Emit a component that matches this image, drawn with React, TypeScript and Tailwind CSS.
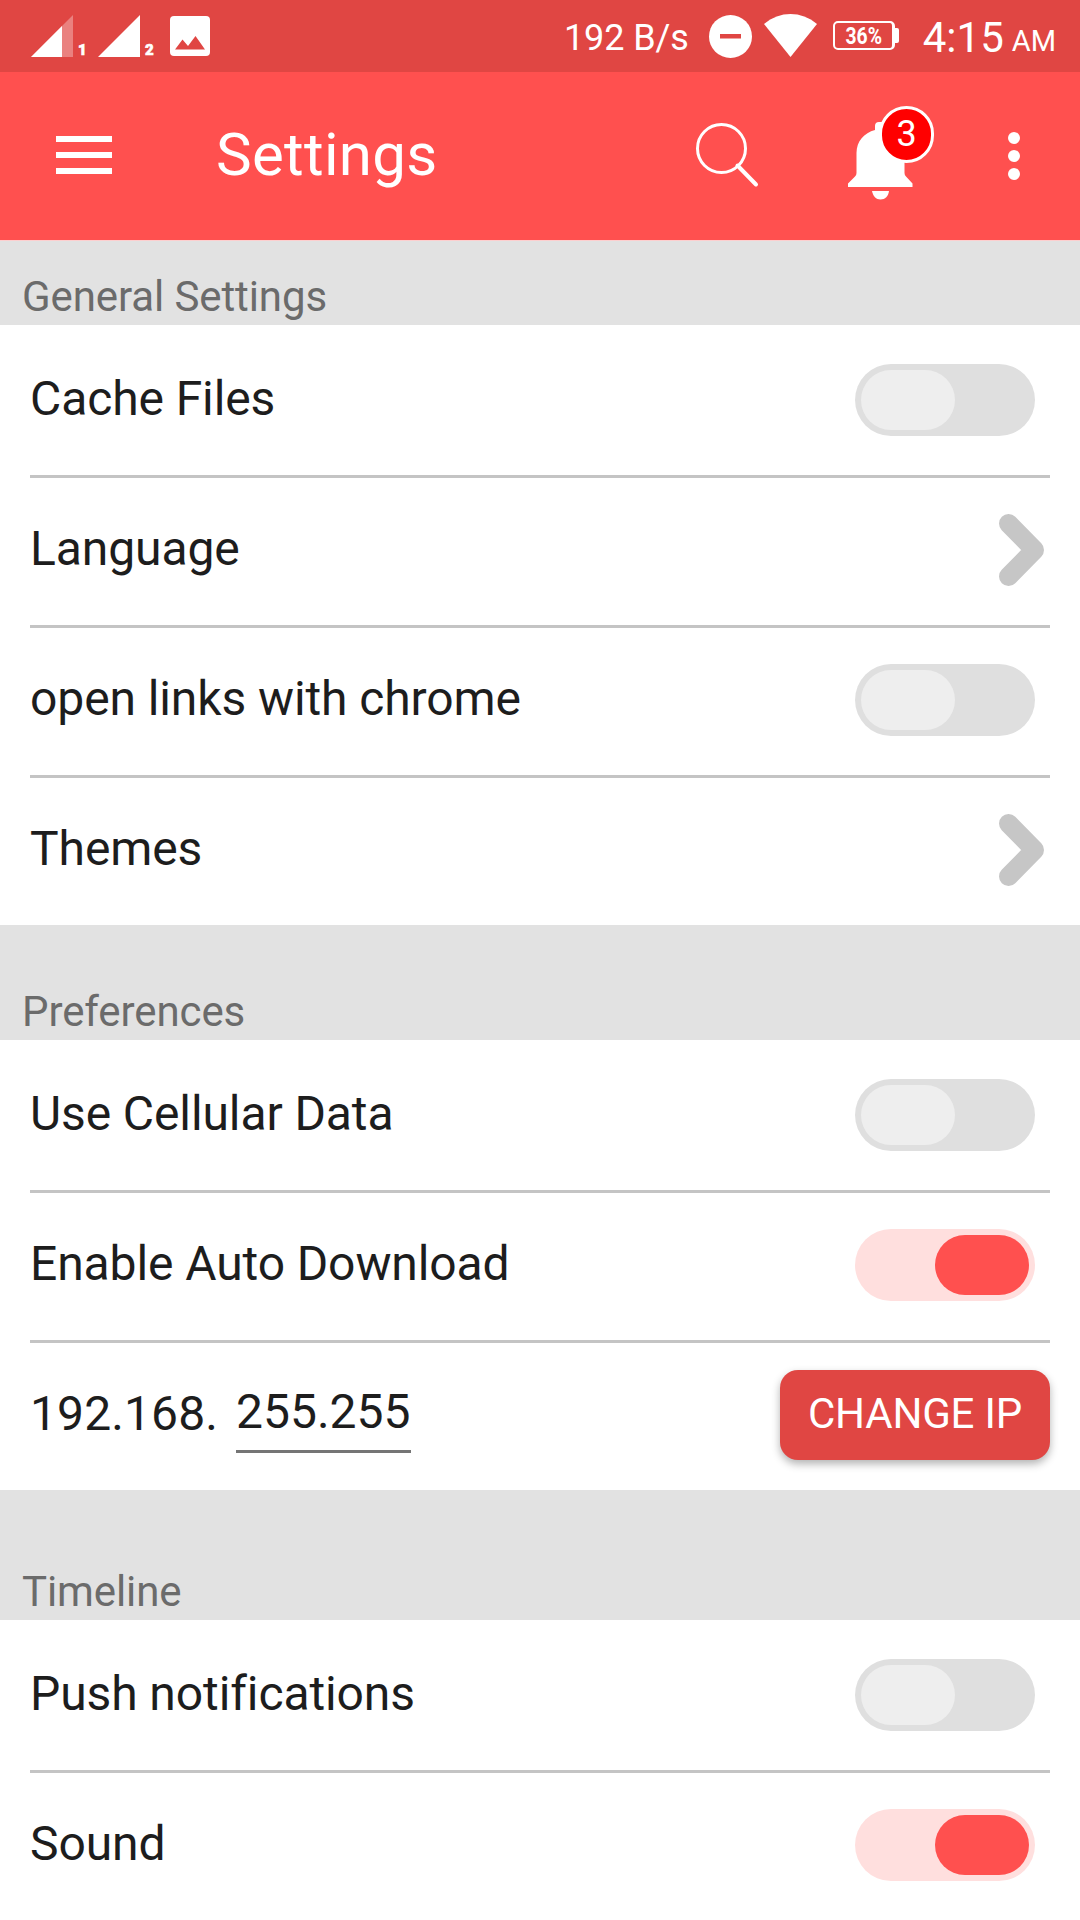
import type { ReactNode } from "react";

function Toggle({ on = false }: { on?: boolean }) {
  return (
    <div
      role="switch"
      aria-checked={on}
      className={
        on
          ? "mr-[15px] flex h-[72px] w-[180px] justify-end rounded-full bg-[#ffdfde] p-[6px]"
          : "mr-[15px] flex h-[72px] w-[180px] justify-start rounded-full bg-[#dfdfdf] p-[6px]"
      }
    >
      <div className={on ? "h-[60px] w-[94px] rounded-full bg-[#ff504f]" : "h-[60px] w-[94px] rounded-full bg-[#eeeeee]"} />
    </div>
  );
}

function Chevron() {
  return (
    <svg className="mr-[6px] h-[72px] w-[45px]" viewBox="0 0 45 72" fill="none">
      <path d="M9.5 9.5 35.5 36 9.5 62.5" stroke="#c6c6c6" strokeWidth="19" strokeLinecap="round" strokeLinejoin="round" />
    </svg>
  );
}

function SectionHeader({ title, className }: { title: string; className: string }) {
  return (
    <div className={`flex items-end bg-[#e2e2e2] pb-[3px] pl-[22px] text-[42px] leading-[50px] tracking-[-0.1px] text-[#6b6b6b] ${className}`}>
      <h2 className="font-normal">{title}</h2>
    </div>
  );
}

function Row({ label, children }: { label: string; children: ReactNode }) {
  return (
    <div className="flex h-[150px] items-center justify-between border-t-[3px] border-[#c4c4c4] pb-[3px] first:border-transparent">
      <span className="pb-[3px] text-[48px] leading-[56px] tracking-[-0.1px] text-[#1d1d1d]">{label}</span>
      {children}
    </div>
  );
}

function Signal({ partial = false, sim }: { partial?: boolean; sim: string }) {
  return (
    <div className="flex items-end">
      <svg className="h-[42px] w-[42px]" viewBox="0 0 42 42">
        <path d="M0 42 42 0V42Z" fill="#fff" fillOpacity={partial ? 0.32 : 1} />
        {partial && <path d="M0 42 31 11V42Z" fill="#fff" />}
      </svg>
      <span className="ml-[5px] h-[14px] w-[10px] text-[15px] font-black leading-[14px] [-webkit-text-stroke:0.6px_white]">{sim}</span>
    </div>
  );
}

function StatusBar() {
  return (
    <div className="flex h-[72px] items-start justify-between bg-[#e04643] pl-[31px] text-white">
      <div className="flex pt-[15px]">
        <Signal partial sim="1" />
        <div className="w-[10px]" />
        <Signal sim="2" />
        <svg className="ml-[15px] mt-px h-[40px] w-[40px]" viewBox="0 0 40 40">
          <rect width="40" height="40" rx="4" fill="#fff" />
          <path d="M5 33.500 12.500 23.500 18 30 25.500 20 35 33.500Z" fill="#e04643" />
        </svg>
      </div>
      <div className="flex">
        <span className="mr-[20px] mt-[17px] text-[36px] leading-[42px] tracking-[-0.1px]">192 B/s</span>
        <svg className="mt-[15px] h-[43px] w-[43px]" viewBox="0 0 43 43">
          <circle cx="21.500" cy="21.500" r="21.500" fill="#fff" />
          <rect x="11" y="19" width="21" height="4.500" fill="#e04643" />
        </svg>
        <svg className="ml-[12px] mt-[14px] h-[43px] w-[53px]" viewBox="0 0 53 43">
          <path d="M0 10C16-3.300 37-3.300 53 10L26.500 43Z" fill="#fff" />
        </svg>
        <div className="ml-[16px] mt-[21px] flex items-center self-start">
          <div className="flex h-[29px] w-[62px] items-center justify-center rounded-[5px] border-2 border-r-[3px] border-white">
            <span className="-mr-px mt-px scale-x-[0.84] text-[23px] font-bold leading-[25px]">36%</span>
          </div>
          <div className="h-[15px] w-[4px] rounded-r-[2px] bg-white" />
        </div>
        <span className="ml-[24px] mt-[13px] text-[42px] leading-[50px]">4:15</span>
        <span className="ml-[8px] mr-[24px] mt-[24px] text-[29px] leading-[34px]">AM</span>
      </div>
    </div>
  );
}

function Toolbar() {
  return (
    <header className="flex h-[169px] items-start border-b border-[#fdcfcf] bg-[#ff504f] text-white">
      <div className="ml-[56px] mt-[64px] flex w-[56px] flex-col gap-[10px]">
        <div className="h-[6px] bg-white" />
        <div className="h-[6px] bg-white" />
        <div className="h-[6px] bg-white" />
      </div>
      <h1 className="ml-[104px] mt-[47px] grow text-[60px] font-normal leading-[72px] tracking-[0.3px]">Settings</h1>
      <svg className="mr-[89px] mt-[50px] h-[66px] w-[63px]" viewBox="0 0 63 66" fill="none" stroke="#fff">
        <circle cx="25.500" cy="26.500" r="24" strokeWidth="3" />
        <path d="M41.500 43.500 60 62.500" strokeWidth="4" strokeLinecap="round" />
      </svg>
      <div className="relative mr-[95px] mt-[49px] h-[79px] w-[65px]">
        <svg className="h-[79px] w-[65px]" viewBox="0 0 65 79" fill="#fff">
          <path d="M27 9V5Q27 1 31 1H34Q38 1 38 5V9C51 12 56.500 20 56.500 32V52Q56.500 54 58 55.500L64.500 62.500V66H0V62.500L7 55.500Q8.500 54 8.500 52V32C8.500 20 16 12 27 9Z" />
          <path d="M24 70H41C40.500 75 37 78.500 32.500 78.500S25 75 24 70Z" />
        </svg>
        <div className="absolute left-[31px] top-[-15px] flex h-[57px] w-[55px] items-center justify-center rounded-full border-[3px] border-white bg-[#ff0000] text-[36px] leading-[40px]">
          <span className="-mt-[2px]">3</span>
        </div>
      </div>
      <div className="mr-[60px] mt-[60px] flex flex-col gap-[6px]">
        <div className="h-[12px] w-[12px] rounded-full bg-white" />
        <div className="h-[12px] w-[12px] rounded-full bg-white" />
        <div className="h-[12px] w-[12px] rounded-full bg-white" />
      </div>
    </header>
  );
}

export default function App() {
  return (
    <div className="h-[1920px] w-[1080px] overflow-hidden bg-white font-['Roboto',sans-serif]">
      <StatusBar />
      <Toolbar />
      <SectionHeader title="General Settings" className="h-[84px]" />
      <section className="px-[30px]">
        <Row label="Cache Files"><Toggle /></Row>
        <Row label="Language"><Chevron /></Row>
        <Row label="open links with chrome"><Toggle /></Row>
        <Row label="Themes"><Chevron /></Row>
      </section>
      <SectionHeader title="Preferences" className="h-[115px]" />
      <section className="px-[30px]">
        <Row label="Use Cellular Data"><Toggle /></Row>
        <Row label="Enable Auto Download"><Toggle on /></Row>
        <div className="flex h-[150px] items-center border-t-[3px] border-[#c4c4c4] pb-[3px] text-[48px] leading-[56px] text-[#1d1d1d]">
          <span className="w-[206px] pb-[3px] tracking-[0.1px]">192.168.</span>
          <div className="mb-[3px] h-[79px] w-[175px] border-b-[3px] border-[#757575] pt-[10px]">255.255</div>
          <button className="ml-auto h-[90px] w-[270px] rounded-[18px] bg-[#e04643] pb-[3px] text-[42px] leading-[50px] tracking-[-0.2px] text-white shadow-[0_4px_8px_rgba(0,0,0,0.3)]">
            CHANGE IP
          </button>
        </div>
      </section>
      <SectionHeader title="Timeline" className="h-[130px]" />
      <section className="px-[30px]">
        <Row label="Push notifications"><Toggle /></Row>
        <Row label="Sound"><Toggle on /></Row>
      </section>
    </div>
  );
}
